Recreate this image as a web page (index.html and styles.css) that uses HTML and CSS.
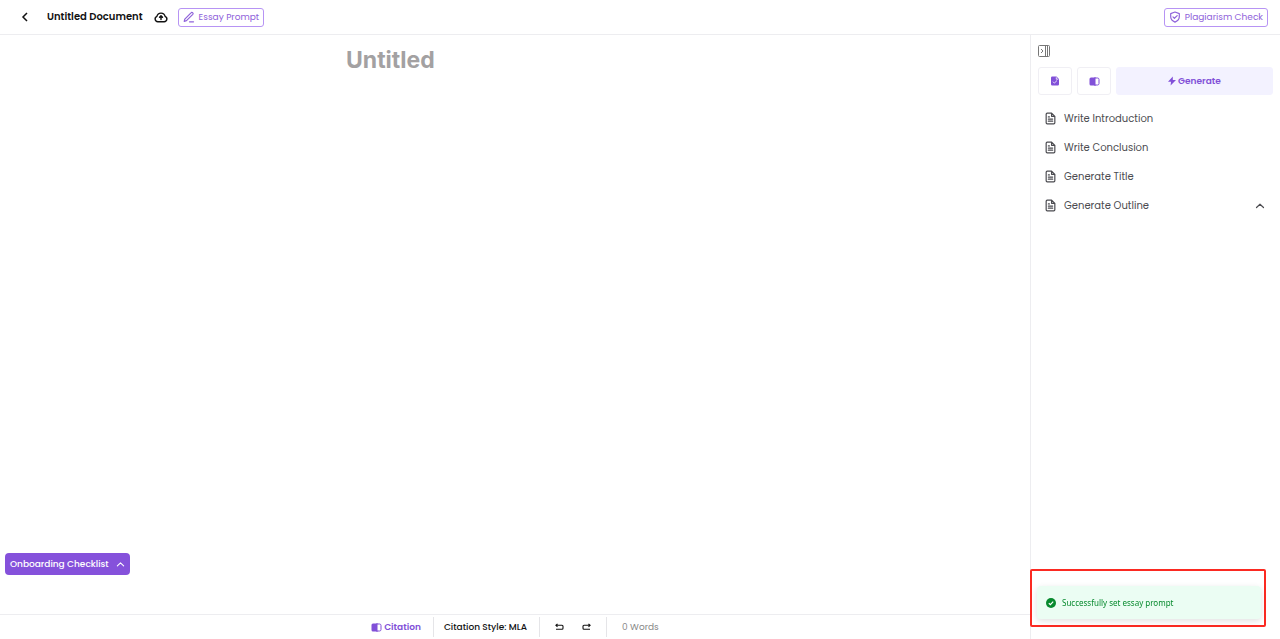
FILE: index.html
```html
<!DOCTYPE html>
<html lang="en">
<head>
  <meta charset="UTF-8" />
  <meta name="viewport" content="width=device-width, initial-scale=1.0"/>
  <title>Untitled Document</title>
  <link rel="stylesheet" href="styles.css">
</head>
<body>
  <svg class="sprite" aria-hidden="true">
    <symbol id="doc" viewBox="0 0 24 24">
      <path d="M14 2H6a2 2 0 0 0-2 2v16a2 2 0 0 0 2 2h12a2 2 0 0 0 2-2V8l-6-6v6h6M8 9h2M8 13h8M8 17h8" fill="none" stroke="currentColor" stroke-width="2.2" stroke-linecap="round" stroke-linejoin="round"/>
    </symbol>
    <symbol id="book" viewBox="0 0 11 11">
      <path d="M2 1.500h4v8H2A1.500 1.500 0 0 1 .5 8V3A1.500 1.500 0 0 1 2 1.500zM5.500 1h1v9h-1z" fill="currentColor"/>
      <path d="M6 2h2.500A1.500 1.500 0 0 1 10 3.500v4A1.500 1.500 0 0 1 8.500 9H6" fill="none" stroke="currentColor"/>
    </symbol>
    <symbol id="chevron-up" viewBox="0 0 10 10">
      <path d="M1.500 6.500 5 3.200 8.500 6.500" fill="none" stroke="currentColor" stroke-width="1.200" stroke-linecap="round" stroke-linejoin="round"/>
    </symbol>
  </svg>

  <header class="topbar">
    <button class="icon-btn back" aria-label="Back">
      <svg width="12" height="12" viewBox="0 0 12 12"><path d="M8 2 4 6l4 4" fill="none" stroke="currentColor" stroke-width="1.500"/></svg>
    </button>
    <h1 class="doc-name">Untitled Document</h1>
    <svg class="cloud" width="14" height="12" viewBox="0 0 14 12" fill="none" stroke="currentColor" stroke-width="1.400" stroke-linecap="round" stroke-linejoin="round">
      <path d="M3.800 10.800a2.800 2.800 0 0 1-.9-5.400 4.200 4.200 0 0 1 8.200 0 2.800 2.800 0 0 1-.9 5.400zM7 8.500V5M5.500 6.300 7 4.800l1.500 1.500"/>
    </svg>
    <button class="outline-btn">
      <svg width="12" height="12" viewBox="0 0 12 12" fill="none" stroke="currentColor" stroke-width="1.200" stroke-linecap="round" stroke-linejoin="round"><path d="M1.800 8.200 8 1.800a1.100 1.100 0 0 1 1.800 1.500L3.500 9.700l-2.300.6zM6.500 10.800h4"/></svg>
      Essay Prompt
    </button>
    <button class="outline-btn check-btn">
      <svg width="12" height="12" viewBox="0 0 12 12" fill="none" stroke="currentColor" stroke-width="1.200" stroke-linecap="round" stroke-linejoin="round"><path d="M6 1 10.300 2.600v3.200c0 2.500-1.800 4.300-4.300 5.300-2.500-1-4.300-2.800-4.300-5.300V2.600zM4 5.900l1.400 1.400L8.200 4.600"/></svg>
      Plagiarism Check
    </button>
  </header>

  <div class="workspace">
    <main class="editor">
      <div class="page">
        <input class="title" type="text" placeholder="Untitled" aria-label="Document title">
      </div>

      <footer class="toolbar">
        <div class="group cite">
          <button class="citation"><svg width="11" height="11"><use href="#book"/></svg>Citation</button>
        </div>
        <div class="group">
          <button class="style-btn">Citation Style: MLA</button>
        </div>
        <div class="group history">
          <button class="icon-btn" aria-label="Undo">
            <svg width="9" height="8" viewBox="0 0 9 8" fill="none" stroke="currentColor" stroke-width="1.100"><path d="M2.500.8.900 2.300l1.600 1.500M1 2.300h6a1 1 0 0 1 1 1v1.900a1 1 0 0 1-1 1H1"/></svg>
          </button>
          <button class="icon-btn" aria-label="Redo">
            <svg width="9" height="8" viewBox="0 0 9 8" fill="none" stroke="currentColor" stroke-width="1.100"><path d="M6.500.8l1.600 1.500-1.600 1.500M8 2.300H2a1 1 0 0 0-1 1v1.900a1 1 0 0 0 1 1h6"/></svg>
          </button>
        </div>
        <div class="group words">0 Words</div>
      </footer>
    </main>

    <aside class="sidebar">
      <button class="icon-btn collapse" aria-label="Collapse sidebar">
        <svg width="12" height="12" viewBox="0 0 12 12" fill="none" stroke="currentColor"><path d="M.5 1.500a1 1 0 0 1 1-1h9a1 1 0 0 1 1 1v9a1 1 0 0 1-1 1h-9a1 1 0 0 1-1-1zM7.500.5v11M9.500.5v11M3 4l2 2-2 2"/></svg>
      </button>

      <div class="tabs">
        <button class="tab" aria-label="Review">
          <svg width="8" height="10" viewBox="0 0 8 10"><path d="M1.200.5H5.500L8 3v5.300A1.200 1.200 0 0 1 6.800 9.500H1.200A1.200 1.200 0 0 1 0 8.300V1.700A1.200 1.200 0 0 1 1.200.5z" fill="currentColor"/><path d="M2 5.700l1.400 1.400L6 4.500M5.300 1.300v1.900h2" fill="none" stroke="#fff" stroke-width=".8"/></svg>
        </button>
        <button class="tab" aria-label="Citations"><svg width="11" height="11"><use href="#book"/></svg></button>
        <button class="tab active">
          <svg width="8" height="10" viewBox="0 0 8 10"><path d="M4.800.5 0 5.800h3L2.600 9.500 8 4H4.800z" fill="currentColor"/></svg>
          Generate
        </button>
      </div>

      <ul class="actions">
        <li><button class="action"><svg width="13" height="13"><use href="#doc"/></svg>Write Introduction</button></li>
        <li><button class="action"><svg width="13" height="13"><use href="#doc"/></svg>Write Conclusion</button></li>
        <li><button class="action"><svg width="13" height="13"><use href="#doc"/></svg>Generate Title</button></li>
        <li><button class="action"><svg width="13" height="13"><use href="#doc"/></svg>Generate Outline<svg class="arrow" width="10" height="10"><use href="#chevron-up"/></svg></button></li>
      </ul>
    </aside>
  </div>

  <button class="onboarding">Onboarding Checklist<svg width="9" height="9"><use href="#chevron-up"/></svg></button>

  <div class="toast-frame">
    <div class="toast" role="status">
      <svg width="10" height="10" viewBox="0 0 10 10"><circle cx="5" cy="5" r="5" fill="#078a2e"/><path d="M2.800 5.200l1.600 1.500 2.800-3" fill="none" stroke="#fff" stroke-width="1.200"/></svg>
      Successfully set essay prompt
    </div>
  </div>
</body>
</html>
```

FILE: styles.css
```css
* {
  box-sizing: border-box;
}

body {
  margin: 0;
  height: 100vh;
  display: flex;
  flex-direction: column;
  font-family: Poppins, Inter, sans-serif;
  font-size: 9px;
  color: #111;
  background: #fff;
}

button {
  font: inherit;
  color: inherit;
  background: none;
  border: none;
  padding: 0;
  display: flex;
  align-items: center;
  cursor: pointer;
}

svg {
  flex-shrink: 0;
}

.sprite {
  display: none;
}

/* Top bar */
.topbar {
  display: flex;
  align-items: center;
  height: 35px;
  padding: 0 12px 0 19px;
  border-bottom: 1px solid #ededf0;
}

.doc-name {
  margin: 0 11px 0 16px;
  font-size: 10px;
  font-weight: 600;
  line-height: 16px;
}

.outline-btn {
  gap: 4px;
  height: 19px;
  margin-left: 10px;
  padding: 0 4px;
  border: 1px solid #b794f4;
  border-radius: 3px;
  color: #8f62da;
}

.check-btn {
  margin-left: auto;
}

/* Editor */
.workspace {
  flex: 1;
  min-height: 0;
  display: flex;
}

.editor {
  flex: 1;
  display: flex;
  flex-direction: column;
}

.page {
  flex: 1;
  width: 100%;
  max-width: 338px;
  margin: 0 auto;
  padding-top: 9px;
}

.title {
  width: 100%;
  border: none;
  outline: none;
  padding: 0;
  font-family: Inter, sans-serif;
  font-size: 23px;
  font-weight: 700;
  line-height: 32px;
}

.title::placeholder {
  color: #a3a1a2;
  opacity: 1;
}

.toolbar {
  display: flex;
  justify-content: center;
  align-items: center;
  height: 25px;
  border-top: 1px solid #ededf0;
}

.group {
  display: flex;
  align-items: center;
  height: 20px;
  padding: 0 12px 0 10px;
  border-right: 1px solid #e5e5e8;
}

.cite {
  padding-left: 0;
}

.citation {
  gap: 2px;
  color: #8150d8;
  font-weight: 600;
}

.style-btn {
  font-weight: 500;
}

.history {
  gap: 18px;
  padding: 0 15px;
}

.words {
  padding: 0 0 0 15px;
  border-right: none;
  color: #888;
}

/* Sidebar */
.sidebar {
  width: 250px;
  padding: 10px 7px;
  border-left: 1px solid #ededf0;
}

.collapse {
  color: #777;
}

.tabs {
  display: flex;
  gap: 5px;
  margin-top: 10px;
}

.tab {
  justify-content: center;
  width: 34px;
  height: 28px;
  border: 1px solid #f0eff4;
  border-radius: 3px;
  color: #8150d8;
}

.tab.active {
  flex: 1;
  gap: 2px;
  border-color: #f3f2ff;
  background: #f3f2ff;
  font-weight: 600;
}

.actions {
  list-style: none;
  margin: 9px 0 0;
  padding: 0;
}

.action {
  width: 100%;
  height: 29px;
  gap: 7px;
  padding: 0 8px 0 6px;
  color: #4b4b50;
  font-size: 10px;
}

.arrow {
  margin-left: auto;
}

/* Floating parts */
.onboarding {
  position: fixed;
  left: 5px;
  bottom: 64px;
  gap: 7px;
  height: 22px;
  padding: 0 5px;
  border-radius: 4px;
  background: #8551db;
  color: #fff;
  font-weight: 500;
}

.toast-frame {
  position: fixed;
  right: 14px;
  bottom: 12px;
  width: 236px;
  padding: 15px 3px 6px 5px;
  border: 2px solid #fb2a22;
  border-radius: 2px;
}

.toast {
  display: flex;
  align-items: center;
  gap: 6px;
  height: 33px;
  padding: 0 9px;
  border-radius: 4px;
  background: #ebfdf3;
  color: #078a2e;
  font-family: "Noto Sans", sans-serif;
  font-size: 8px;
  box-shadow: 0 2px 6px rgba(0, 0, 0, 0.12);
}
```
